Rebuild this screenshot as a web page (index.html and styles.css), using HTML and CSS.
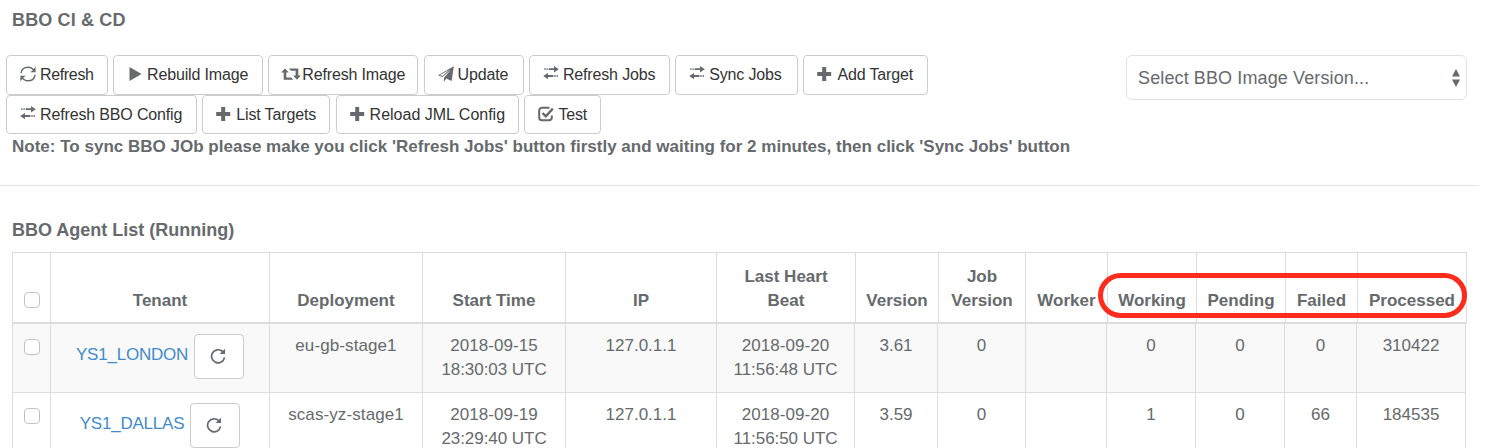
FILE: index.html
```html
<!DOCTYPE html>
<html lang="en">
<head>
<meta charset="utf-8">
<title>BBO CI &amp; CD</title>
<link rel="stylesheet" href="styles.css">
</head>
<body>
<svg class="defs" width="0" height="0">
  <symbol id="refresh" viewBox="0 0 16 16"><g fill="none" stroke="currentColor" stroke-width="1.400"><path d="M1 7.200C1.500 3.400 4.500 1.200 8 1.200c2.500 0 4.600 1.200 6 3.400M15 8.800c-.5 3.800-3.500 6-7 6-2.500 0-4.600-1.200-6-3.400"/></g><path d="M15.600.6v5.600H10l2-1.200 1.500-1.500zM.4 15.400V9.800H6l-2 1.200-1.500 1.500z"/></symbol>
  <symbol id="play" viewBox="0 0 16 16"><path d="M2.500 1v14l12-7z"/></symbol>
  <symbol id="retweet" viewBox="0 0 20 16"><path d="M4 2.500 7.800 6.500H5.300v5h5l2 2.300H2.700V6.500H0zM8 2.500h9.300V9.500h2.500L16 13.800l-4-4.300h2.600V4.800h-4.700z"/></symbol>
  <symbol id="plane" viewBox="0 0 16 16"><path fill-rule="evenodd" d="M15.800.3 13.700 15 8.300 12.600 5.900 15.700V11.700L13.200 3.500 4.500 11 0 9.200zM1.900 9.100 4.400 10 11.500 3.700z"/></symbol>
  <symbol id="transfer" viewBox="0 0 16 16"><path d="M1.300 2.200h1.200v1.900H1.300zM3.500 2.200h1.200v1.900H3.500zM5.700 2.200H11V0L15.800 3.200 11 6.400V4.100H5.700zM14.800 9.100h-1.200V11h1.200zM12.600 9.100h-1.200V11h1.200zM10.400 9.100H5V6.900L.2 10.100 5 13.300V11h5.400z"/></symbol>
  <symbol id="plus" viewBox="0 0 16 16"><path d="M5.200 1h4v5h5v4h-5v5h-4v-5h-5V6h5z"/></symbol>
  <symbol id="check" viewBox="0 0 16 16"><path d="M11.500 1.700H4A2.800 2.800 0 0 0 1.200 4.500v7A2.800 2.800 0 0 0 4 14.300h7a2.800 2.800 0 0 0 2.800-2.800V9.500" fill="none" stroke="currentColor" stroke-width="2"/><path d="m4.500 7 3.300 3.200 7-7.600" fill="none" stroke="currentColor" stroke-width="2.400"/></symbol>
  <symbol id="repeat" viewBox="0 0 16 16"><path d="M12.700 3.700A6.500 6.500 0 1 0 14.500 9.300" fill="none" stroke="currentColor" stroke-width="1.700"/><path d="M15 .8v5.300H9.600z"/></symbol>
</svg>

<h1 class="title">BBO CI &amp; CD</h1>

<div class="toolbar">
  <div class="buttons">
    <div class="btn-row">
      <button class="btn w101"><svg class="icon"><use href="#refresh"/></svg>Refresh</button>
      <button class="btn w150"><svg class="icon"><use href="#play"/></svg>Rebuild Image</button>
      <button class="btn w150"><svg class="icon icon-wide"><use href="#retweet"/></svg>Refresh Image</button>
      <button class="btn w100"><svg class="icon"><use href="#plane"/></svg>Update</button>
      <button class="btn w141"><svg class="icon"><use href="#transfer"/></svg>Refresh Jobs</button>
      <button class="btn w123"><svg class="icon"><use href="#transfer"/></svg>Sync Jobs</button>
      <button class="btn w125"><svg class="icon"><use href="#plus"/></svg>Add Target</button>
    </div>
    <div class="btn-row">
      <button class="btn w191"><svg class="icon"><use href="#transfer"/></svg>Refresh BBO Config</button>
      <button class="btn w128"><svg class="icon"><use href="#plus"/></svg>List Targets</button>
      <button class="btn w183"><svg class="icon"><use href="#plus"/></svg>Reload JML Config</button>
      <button class="btn w77"><svg class="icon"><use href="#check"/></svg>Test</button>
    </div>
  </div>
  <div class="select"><span>Select BBO Image Version...</span><svg class="arrows" viewBox="0 0 8 18"><path d="M4 0l4 7.500H0zM4 18l4-7.500H0z"/></svg></div>
</div>

<p class="note">Note: To sync BBO JOb please make you click 'Refresh Jobs' button firstly and waiting for 2 minutes, then click 'Sync Jobs' button</p>
<div class="rule"></div>

<h2 class="title list-title">BBO Agent List (Running)</h2>

<div class="table">
  <div class="row head">
    <div class="cell"><span class="box"></span></div>
    <div class="cell">Tenant</div>
    <div class="cell">Deployment</div>
    <div class="cell">Start Time</div>
    <div class="cell">IP</div>
    <div class="cell">Last Heart<br>Beat</div>
    <div class="cell">Version</div>
    <div class="cell">Job<br>Version</div>
    <div class="cell">Worker</div>
    <div class="cell">Working</div>
    <div class="cell">Pending</div>
    <div class="cell">Failed</div>
    <div class="cell">Processed</div>
    <div class="highlight"></div>
  </div>
  <div class="row odd">
    <div class="cell"><span class="box"></span></div>
    <div class="cell tenant"><a class="link">YS1_LONDON</a><button class="reload"><svg class="icon"><use href="#repeat"/></svg></button></div>
    <div class="cell dep">eu-gb-stage1</div>
    <div class="cell date">2018-09-15<br><span class="time">18:30:03 UTC</span></div>
    <div class="cell">127.0.1.1</div>
    <div class="cell date">2018-09-20<br><span class="time">11:56:48 UTC</span></div>
    <div class="cell">3.61</div>
    <div class="cell">0</div>
    <div class="cell"></div>
    <div class="cell">0</div>
    <div class="cell">0</div>
    <div class="cell">0</div>
    <div class="cell">310422</div>
  </div>
  <div class="row">
    <div class="cell"><span class="box"></span></div>
    <div class="cell tenant"><a class="link">YS1_DALLAS</a><button class="reload"><svg class="icon"><use href="#repeat"/></svg></button></div>
    <div class="cell dep">scas-yz-stage1</div>
    <div class="cell date">2018-09-19<br><span class="time">23:29:40 UTC</span></div>
    <div class="cell">127.0.1.1</div>
    <div class="cell date">2018-09-20<br><span class="time">11:56:50 UTC</span></div>
    <div class="cell">3.59</div>
    <div class="cell">0</div>
    <div class="cell"></div>
    <div class="cell">1</div>
    <div class="cell">0</div>
    <div class="cell">66</div>
    <div class="cell">184535</div>
  </div>
</div>
</body>
</html>
```

FILE: styles.css
```css
* { box-sizing: border-box; }
html { overflow: hidden; }
body {
  margin: 0;
  width: 1486px;
  height: 448px;
  overflow: hidden;
  background: #fff;
  color: #666a6d;
  font-family: "Liberation Sans", Arial, sans-serif;
  font-size: 17px;
  line-height: 24px;
}
.defs { display: block; }
.title {
  margin: 0;
  padding: 8px 0 0 12px;
  height: 55px;
  font-size: 18px;
  font-weight: bold;
  line-height: 24px;
  letter-spacing: 0.150px;
}
.toolbar {
  display: flex;
  justify-content: space-between;
  padding: 0 19px 0 6px;
  height: 79px;
}
.buttons { display: flex; flex-direction: column; }
.btn-row { display: flex; gap: 5.300px; }
.btn {
  display: flex;
  align-items: center;
  gap: 4px;
  height: 39.500px;
  padding: 1px 0 0 13px;
  border: 1.500px solid #ccc;
  border-radius: 4px;
  background: #fff;
  color: #333;
  font: 16px/24px "Liberation Sans", Arial, sans-serif;
  letter-spacing: -0.150px;
  white-space: nowrap;
}
.btn .icon { margin-top: -2px; }
.w77 { width: 77px; }
.w100 { width: 100px; }
.w101 { width: 101.700px; letter-spacing: -0.350px; }
.w123 { width: 123px; }
.w125 { width: 125px; }
.w128 { width: 128px; }
.w141 { width: 141px; }
.w150 { width: 150px; }
.w183 { width: 183.500px; letter-spacing: 0; }
.w191 { width: 191px; }
.icon {
  flex: none;
  width: 16px;
  height: 16px;
  fill: currentColor;
  color: #666a6d;
}
.icon-wide { width: 20px; margin: 0 -3px 0 -1px; }
.select {
  display: flex;
  align-items: center;
  justify-content: space-between;
  width: 341px;
  height: 45px;
  padding: 0 6px 0 11px;
  border: 1px solid #e2e2e2;
  border-radius: 6px;
  font-size: 18px;
  letter-spacing: 0.120px;
}
.arrows { width: 8px; height: 18px; fill: #666a6d; }
.note {
  margin: 0;
  padding: 1px 0 0 12px;
  height: 51px;
  font-weight: bold;
  letter-spacing: 0.010px;
  white-space: nowrap;
}
.rule { width: 1479px; height: 1px; background: #e3e5e8; }
.list-title { height: 66px; padding-top: 32px; letter-spacing: 0; }
.table { margin-left: 12px; }
.row {
  display: grid;
  position: relative;
  grid-template-columns: 38px 219px 153px 143px 151px 138px 83px 88px 81px 89px 89px 72px 110px;
  width: 1454px;
  height: 69px;
  border-bottom: 1px solid #ddd;
}
.row.head {
  grid-template-columns: 38px 219px 153px 143px 151px 139px 83px 87px 82px 89px 89px 72px 110px;
  width: 1455px;
  height: 72px;
  border-top: 1px solid #ddd;
  border-bottom: 2px solid #ddd;
  font-weight: bold;
}
.odd { background: #f9f9f9; }
.cell {
  padding-top: 10px;
  border-left: 1px solid #ddd;
  text-align: center;
  white-space: nowrap;
}
.cell:nth-child(13) { border-right: 1px solid #ddd; }
.head .cell {
  display: flex;
  align-items: flex-end;
  justify-content: center;
  padding: 0 0 9px;
}
.date { letter-spacing: 0.050px; }
.time { letter-spacing: -0.050px; }
.dep { letter-spacing: 0.100px; }
.box {
  display: block;
  width: 16px;
  height: 16px;
  margin: 5px auto 0;
  border: 1px solid #c2c2c2;
  border-radius: 4px;
  background: #fff;
}
.head .box { margin-bottom: 5px; }
.tenant {
  display: flex;
  align-items: flex-start;
  justify-content: center;
  gap: 6px;
}
.link { padding-top: 9px; color: #428bca; letter-spacing: -0.220px; }
.reload {
  display: flex;
  align-items: center;
  justify-content: center;
  width: 50px;
  height: 45px;
  padding: 0 2px 2px 0;
  border: 1px solid #ccc;
  border-radius: 4px;
  background: #fff;
}
.highlight {
  position: absolute;
  left: 1086px;
  top: 20px;
  width: 369px;
  height: 45px;
  border: 5px solid #ff2b1c;
  border-radius: 23px;
}
```
